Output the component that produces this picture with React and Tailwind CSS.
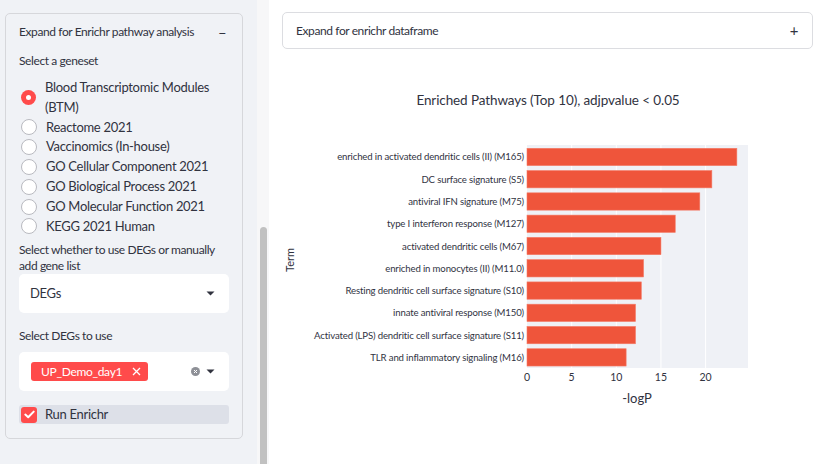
import React from "react";

const genesets = [
  "Reactome 2021",
  "Vaccinomics (In-house)",
  "GO Cellular Component 2021",
  "GO Biological Process 2021",
  "GO Molecular Function 2021",
  "KEGG 2021 Human",
];

const bars = [
  ["enriched in activated dendritic cells (II) (M165)", 23.5],
  ["DC surface signature (S5)", 20.7],
  ["antiviral IFN signature (M75)", 19.35],
  ["type I interferon response (M127)", 16.6],
  ["activated dendritic cells (M67)", 15.0],
  ["enriched in monocytes (II) (M11.0)", 13.05],
  ["Resting dendritic cell surface signature (S10)", 12.8],
  ["innate antiviral response (M150)", 12.15],
  ["Activated (LPS) dendritic cell surface signature (S11)", 12.15],
  ["TLR and inflammatory signaling (M16)", 11.1],
];

function Radio({ checked }) {
  if (checked)
    return (
      <span className="flex h-[15px] w-[15px] shrink-0 items-center justify-center rounded-full bg-[#ff4b4b]">
        <span className="h-[5px] w-[5px] rounded-full bg-white" />
      </span>
    );
  return <span className="h-[16px] w-[16px] shrink-0 rounded-full border-[1.5px] border-[#b9bac0] bg-white" />;
}

function Caret() {
  return (
    <svg width="9" height="5" viewBox="0 0 9 5">
      <path d="M0.5 0.5 L8.5 0.5 L4.5 4.5 Z" fill="#31333f" />
    </svg>
  );
}

function Chart() {
  const x0 = 245;
  const sc = 8.93;
  const plotW = 221;
  const top = 85;
  const pitch = 22.27;
  const bh = 17.3;
  const font = "Lato, 'Noto Sans', sans-serif";
  return (
    <svg width="531" height="360" viewBox="0 0 531 360" style={{ fontFamily: font }}>
      <text x="266" y="45" textAnchor="middle" fontSize="13.5" letterSpacing="-0.1" fill="#31333f">
        Enriched Pathways (Top 10), adjpvalue &lt; 0.05
      </text>
      <rect x={x0} y={top} width={plotW} height="223" fill="#eff1f6" />
      {[5, 10, 15, 20].map((v) => (
        <line key={v} x1={x0 + v * sc} x2={x0 + v * sc} y1={top} y2={top + 223} stroke="#ffffff" strokeWidth="1" />
      ))}
      {bars.map(([label, v], i) => {
        const y = top + 3.3 + i * pitch;
        return (
          <g key={label}>
            <rect x={x0} y={y} width={v * sc} height={bh} fill="#ef553b" stroke="#f47a66" strokeWidth="0.6" />
            <text x="242" y={y + bh / 2 + 3.5} textAnchor="end" fontSize="9.6" letterSpacing="-0.15" fill="#31333f">
              {label}
            </text>
          </g>
        );
      })}
      {[0, 5, 10, 15, 20].map((v) => (
        <text key={v} x={x0 + v * sc} y="321" textAnchor="middle" fontSize="10.5" fill="#31333f">
          {v}
        </text>
      ))}
      <text x="355" y="343" textAnchor="middle" fontSize="13" fill="#31333f">
        -logP
      </text>
      <text x="12" y="200" textAnchor="middle" fontSize="11" fill="#31333f" transform="rotate(-90 12 200)">
        Term
      </text>
    </svg>
  );
}

export default function App() {
  return (
    <div className="flex h-[464px] w-[820px] overflow-hidden font-['Lato','Noto_Sans',sans-serif] text-[#31333f]">
      {/* Sidebar */}
      <div className="w-[257px] shrink-0 bg-[#f0f2f6] pl-[5px] pr-[14px] pt-[13px]">
        <div className="rounded-[5px] border border-[#d6d7db] px-[13px] pb-[14px]">
          <div className="flex h-[36px] items-center justify-between text-[12px] tracking-[-0.4px]">
            <span>Expand for Enrichr pathway analysis</span>
            <span className="mr-[3px] text-[14px]">−</span>
          </div>
          <div className="mt-[3px] text-[12px] leading-[16px] tracking-[-0.4px]">Select a geneset</div>
          <div className="mt-[9px] flex flex-col text-[13px] leading-[19.8px] tracking-[-0.3px]">
            <div className="flex items-center gap-[9px] pl-[2px]">
              <Radio checked />
              <span>
                Blood Transcriptomic Modules
                <br />
                (BTM)
              </span>
            </div>
            {genesets.map((g) => (
              <div key={g} className="flex items-center gap-[9px] pl-[2px]">
                <Radio />
                <span>{g}</span>
              </div>
            ))}
          </div>
          <div className="mt-[6px] text-[12px] leading-[16px] tracking-[-0.4px]">
            Select whether to use DEGs or manually
            <br />
            add gene list
          </div>
          <div className="flex h-[39px] items-center justify-between rounded-[5px] bg-white pl-[11px] pr-[14px] text-[13px] tracking-[-0.3px]">
            <span>DEGs</span>
            <Caret />
          </div>
          <div className="mt-[15px] text-[12px] leading-[16px] tracking-[-0.4px]">Select DEGs to use</div>
          <div className="mt-[8px] flex h-[39px] items-center justify-between rounded-[5px] bg-white pl-[12px] pr-[14px]">
            <span className="flex h-[19px] w-[117px] items-center justify-between rounded-[3px] bg-[#ff4b4b] pl-[10px] pr-[7px] text-[12px] tracking-[-0.3px] text-white">
              <span>UP_Demo_day1</span>
              <svg width="9" height="9" viewBox="0 0 9 9">
                <path d="M1 1 L8 8 M8 1 L1 8" stroke="white" strokeWidth="1.3" />
              </svg>
            </span>
            <span className="flex items-center gap-[6px]">
              <span className="flex h-[9px] w-[9px] items-center justify-center rounded-full bg-[#8e9097]">
                <svg width="5" height="5" viewBox="0 0 5 5">
                  <path d="M1 1 L4 4 M4 1 L1 4" stroke="white" strokeWidth="1" />
                </svg>
              </span>
              <Caret />
            </span>
          </div>
          <div className="mt-[14px] flex h-[19px] items-center gap-[8px] rounded-[3px] bg-[#dde0e8] pl-[2px] text-[13px] tracking-[-0.3px]">
            <span className="flex h-[16px] w-[16px] items-center justify-center rounded-[3px] bg-[#ff4b4b]">
              <svg width="11" height="9" viewBox="0 0 11 9">
                <path d="M1.3 4.6 L4.2 7.3 L9.7 1.6" stroke="white" strokeWidth="2" fill="none" strokeLinecap="round" strokeLinejoin="round" />
              </svg>
            </span>
            <span>Run Enrichr</span>
          </div>
        </div>
      </div>
      {/* Scrollbar */}
      <div className="flex w-[12px] shrink-0 flex-col bg-[#f7f7f8]">
        <div className="mx-auto mt-[227px] w-[7px] flex-1 rounded-t-full bg-[#c1c1c1]" />
      </div>
      {/* Main */}
      <div className="flex-1 bg-white pl-[13px] pr-[7px] pt-[12px]">
        <div className="flex h-[37px] items-center justify-between rounded-[5px] border border-[#dcdde1] pl-[13px] pr-[14px] text-[12px] tracking-[-0.4px]">
          <span>Expand for enrichr dataframe</span>
          <span className="text-[15px]">+</span>
        </div>
        <div className="mt-[11px]">
          <Chart />
        </div>
      </div>
    </div>
  );
}
